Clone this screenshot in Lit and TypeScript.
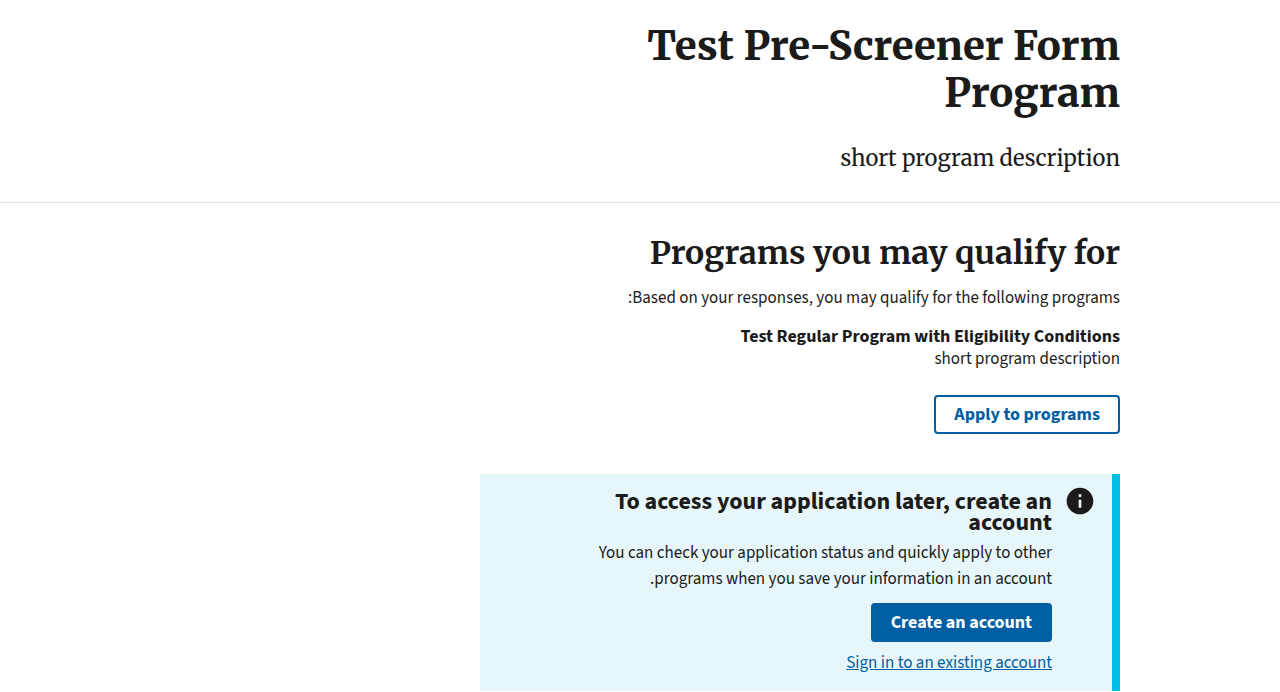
import { LitElement, html, css } from "lit";
import { customElement } from "lit/decorators.js";

@customElement("app-root")
export class AppRoot extends LitElement {
  static styles = css`
    :host {
      display: block;
      color: #1b1b1b;
      background: #fff;
      font-family: "Source Sans Pro", "Source Sans 3", "Noto Sans CJK SC", "Noto Sans", sans-serif;
      font-size: 17px;
      line-height: 22px;
    }
    *, *::before, *::after { box-sizing: border-box; }
    h1, h2, h3, p { margin: 0; }
    .column {
      max-width: 640px;
      margin-inline: max(160px, calc((100% - 960px) / 2)) auto;
    }
    header {
      padding-block: 23px 27px;
      border-bottom: 1px solid #dfe1e2;
      font-family: Merriweather, "Liberation Serif", serif;
    }
    h1 { font-size: 40px; font-weight: 800; line-height: 47px; }
    .lead { margin-top: 24px; font-size: 22px; line-height: 34px; }
    main { padding-top: 30px; }
    h2 { font: bold 32px/40px Merriweather, "Liberation Serif", serif; }
    .intro { margin-top: 14px; }
    .program { margin-top: 17px; }
    .program h3 { font-size: 18px; line-height: 22px; }
    button {
      display: block;
      height: 39px;
      padding: 0 18px;
      border: 2px solid #005ea2;
      border-radius: 4px;
      font: inherit;
      font-size: 18px;
      font-weight: bold;
      cursor: pointer;
    }
    .outline { margin-top: 25px; color: #005ea2; background: #fff; }
    .solid { margin-top: 11px; color: #fff; background: #005ea2; }
    .alert {
      display: flex;
      gap: 12px;
      margin-top: 40px;
      padding: 11px 16px 15px 60px;
      background: #e7f6f8;
      border-inline-start: 8px solid #00bde3;
    }
    .alert svg { flex: none; width: 32px; height: 32px; fill: #1b1b1b; }
    .alert h3 { margin-top: 6px; font-size: 24px; line-height: 21px; }
    .alert p { line-height: 26px; margin-top: 7px; }
    a { display: block; width: fit-content; margin-top: 8px; color: #005ea2; line-height: 26px; }
  `;

  render() {
    return html`
      <div dir="rtl">
        <header><div class="column">
          <h1>Test Pre-Screener Form Program</h1>
          <p class="lead">short program description</p>
        </div></header>
        <main class="column">
          <h2>Programs you may qualify for</h2>
          <p class="intro">Based on your responses, you may qualify for the following programs:</p>
          <section class="program">
            <h3>Test Regular Program with Eligibility Conditions</h3>
            <p>short program description</p>
          </section>
          <button class="outline" type="button">Apply to programs</button>
          <section class="alert">
            <svg viewBox="0 0 24 24" aria-hidden="true"><path d="M12 2C6.48 2 2 6.48 2 12s4.480 10 10 10 10-4.480 10-10S17.520 2 12 2zm1 15h-2v-6h2v6zm0-8h-2V7h2v2z" /></svg>
            <div>
              <h3>To access your application later, create an account</h3>
              <p>You can check your application status and quickly apply to other programs when you save your information in an account.</p>
              <button class="solid" type="button">Create an account</button>
              <a href="#">Sign in to an existing account</a>
            </div>
          </section>
        </main>
      </div>
    `;
  }
}
